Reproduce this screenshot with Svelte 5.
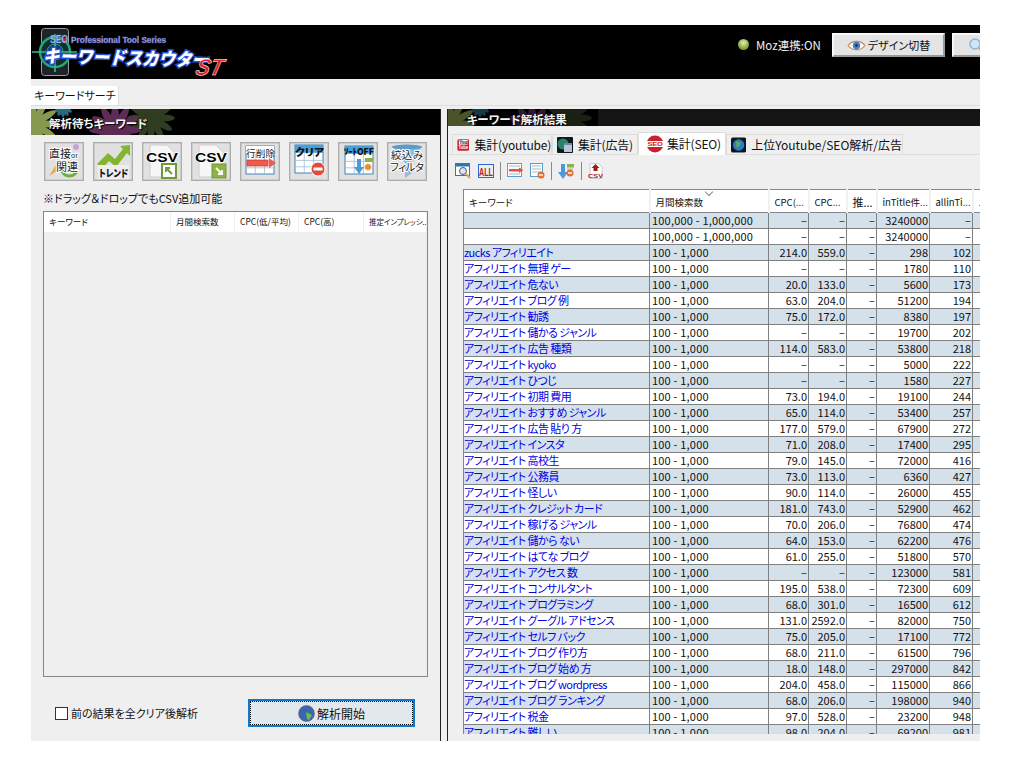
<script>
  const A = 'アフィリエイト ';
  const M = '100 - 1,000';
  const D = '–';
  const rows = [
    ['', '100,000 - 1,000,000', D, D, '3240000', D],
    ['', '100,000 - 1,000,000', D, D, '3240000', D],
    ['zucks アフィリエイト', M, '214.0', '559.0', '298', '102'],
    [A + '無理 ゲー', M, D, D, '1780', '110'],
    [A + '危ない', M, '20.0', '133.0', '5600', '173'],
    [A + 'ブログ 例', M, '63.0', '204.0', '51200', '194'],
    [A + '勧誘', M, '75.0', '172.0', '8380', '197'],
    [A + '儲かる ジャンル', M, D, D, '19700', '202'],
    [A + '広告 種類', M, '114.0', '583.0', '53800', '218'],
    [A + 'kyoko', M, D, D, '5000', '222'],
    [A + 'ひつじ', M, D, D, '1580', '227'],
    [A + '初期 費用', M, '73.0', '194.0', '19100', '244'],
    [A + 'おすすめ ジャンル', M, '65.0', '114.0', '53400', '257'],
    [A + '広告 貼り 方', M, '177.0', '579.0', '67900', '272'],
    [A + 'インスタ', M, '71.0', '208.0', '17400', '295'],
    [A + '高校生', M, '79.0', '145.0', '72000', '416'],
    [A + '公務員', M, '73.0', '113.0', '6360', '427'],
    [A + '怪しい', M, '90.0', '114.0', '26000', '455'],
    [A + 'クレジット カード', M, '181.0', '743.0', '52900', '462'],
    [A + '稼げる ジャンル', M, '70.0', '206.0', '76800', '474'],
    [A + '儲から ない', M, '64.0', '153.0', '62200', '476'],
    [A + 'はてな ブログ', M, '61.0', '255.0', '51800', '570'],
    [A + 'アクセス 数', M, D, D, '123000', '581'],
    [A + 'コンサルタント', M, '195.0', '538.0', '72300', '609'],
    [A + 'プログラミング', M, '68.0', '301.0', '16500', '612'],
    [A + 'グーグル アドセンス', M, '131.0', '2592.0', '82000', '750'],
    [A + 'セルフ バック', M, '75.0', '205.0', '17100', '772'],
    [A + 'ブログ 作り方', M, '68.0', '211.0', '61500', '796'],
    [A + 'ブログ 始め 方', M, '18.0', '148.0', '297000', '842'],
    [A + 'ブログ wordpress', M, '204.0', '458.0', '115000', '866'],
    [A + 'ブログ ランキング', M, '68.0', '206.0', '198000', '940'],
    [A + '税金', M, '97.0', '528.0', '23200', '948'],
    [A + '難しい', M, '98.0', '204.0', '69200', '981']
  ];
  const petals = [0, 30, 60, 90, 120, 150, 180, 210, 240, 270, 300, 330];
  const blooms = [
    { x: 120, y: 9, r: 12, w: 3.5, c: '#2f3d22' },
    { x: 84, y: 21, r: 13, w: 4, c: '#5c2c54' },
    { x: 32, y: -2, r: 5, w: 2, c: '#2a6a80' },
    { x: 2, y: 15, r: 13, w: 3.5, c: '#87994e' }
  ];
</script>

{#snippet flower(w, dim)}
  <svg class="flower" width={w} height="26" viewBox="0 0 {w} 26">
    <g opacity={dim}>
      {#each blooms as b}
        {#each petals as p}
          <ellipse cx={b.x + b.r} cy={b.y} rx={b.r} ry={b.w} fill={b.c} transform="rotate({p} {b.x} {b.y})" />
        {/each}
      {/each}
    </g>
  </svg>
{/snippet}

{#snippet grid(x, y, w, h, top)}
  <rect {x} {y} width={w} height={h} fill="#fff" stroke="#3c82b8" />
  <rect {x} {y} width={w} height={h * 0.28} fill={top} />
  <path d="M{x} {y + h * 0.55}H{x + w}M{x} {y + h * 0.78}H{x + w}M{x + w * 0.33} {y + h * 0.28}V{y + h}M{x + w * 0.66} {y + h * 0.28}V{y + h}" stroke="#9dbdd6" stroke-width="0.8" fill="none" />
{/snippet}

<div class="app">
  <header class="top">
    <svg class="logo" width="210" height="54" viewBox="0 0 210 54">
      <rect x="10.5" y="3.5" width="27" height="47" rx="3" fill="#1e2428" stroke="#9a9ea2" />
      <circle cx="24" cy="27" r="15" fill="#12302c" stroke="#22a878" stroke-width="2.5" />
      <circle cx="24" cy="27" r="8" fill="#123a78" stroke="#22a878" />
      <path d="M1 27H46M24 9V47" stroke="#3cb88a" stroke-width="1.6" />
      <text x="19" y="18" class="logo-seo" textLength="18" lengthAdjust="spacingAndGlyphs">SEO</text>
      <circle cx="33.6" cy="14.5" r="1.5" fill="#d82020" />
      <text x="40" y="18" class="logo-sub" textLength="95" lengthAdjust="spacingAndGlyphs">Professional Tool Series</text>
      <g transform="translate(14 0) rotate(1.5 100 30) skewX(-14)">
        <text x="8" y="40" class="logo-name" textLength="165" lengthAdjust="spacingAndGlyphs">キーワードスカウター</text>
      </g>
      <g transform="translate(13 0) skewX(-14)">
        <text x="163" y="50" class="logo-st" textLength="27" lengthAdjust="spacingAndGlyphs">ST</text>
      </g>
    </svg>
    <div class="top-right">
      <span class="led"></span>
      <span class="moz">Moz連携:ON</span>
      <button class="top-btn">
        <svg width="19" height="13" viewBox="0 0 20 14">
          <path d="M1 7C5 1 15 1 19 7C15 13 5 13 1 7Z" fill="#fff" stroke="#c98a5a" stroke-width="1.4" />
          <circle cx="10" cy="7" r="4" fill="#4a7fc0" />
          <circle cx="10" cy="7" r="1.6" fill="#123c78" />
        </svg>
        デザイン切替
      </button>
      <button class="top-btn search" aria-label="検索">
        <svg width="16" height="16" viewBox="0 0 16 16">
          <circle cx="7" cy="7" r="5" fill="#cfe6f6" stroke="#8fb6d6" stroke-width="1.5" />
          <path d="M11 11L15 15" stroke="#d9a050" stroke-width="2" />
        </svg>
      </button>
    </div>
  </header>

  <nav class="tabs-main"><span class="tab-main">キーワードサーチ</span></nav>

  <main class="split">
    <section class="left">
      <div class="panel-head tall">
        {@render flower(145, 1)}
        <h2 class="left-title">解析待ちキーワード</h2>
      </div>
      <div class="left-body">
        <div class="tools">
          <button class="tool" aria-label="直接or関連">
            <svg viewBox="0 0 38 37" width="38" height="37">
              <path d="M4 33L11 22L15 26Z" fill="#e8a850" />
              <path d="M17 28C20 35 30 35 33 26" fill="none" stroke="#6fb13a" stroke-width="3" />
              <circle cx="31" cy="4" r="3" fill="#c9a0d8" />
              <text x="4" y="15" class="ic-txt halo" font-size="11">直接<tspan font-size="7">or</tspan></text>
              <text x="11" y="28" class="ic-txt halo" font-size="11">関連</text>
            </svg>
          </button>
          <button class="tool" aria-label="トレンド">
            <svg viewBox="0 0 38 37" width="38" height="37">
              <path d="M3 21L14 10L21 16L29 6L26 3L36 2L36 13L33 10L22 24L15 18L8 26Z" fill="#84b52f" />
              <rect x="4" y="22" width="31" height="14" fill="#eee" />
              <text x="5" y="34" class="ic-bold" font-size="10" textLength="29" lengthAdjust="spacingAndGlyphs" fill="#1c2f48">トレンド</text>
            </svg>
          </button>
          <button class="tool" aria-label="CSV読込">
            <svg viewBox="0 0 38 37" width="38" height="37">
              <path d="M7 2H24L31 9V34H7Z" fill="#f7f7f7" stroke="#ccc" />
              <text x="3" y="19" class="ic-csv" font-size="13" textLength="32" lengthAdjust="spacingAndGlyphs">CSV</text>
              <rect x="19" y="21" width="14" height="14" fill="#fff" stroke="#6c9a36" stroke-width="2" />
              <path d="M29 31L23 25M23 29V25H27" stroke="#6c9a36" stroke-width="1.8" fill="none" />
            </svg>
          </button>
          <button class="tool" aria-label="CSV出力">
            <svg viewBox="0 0 38 37" width="38" height="37">
              <path d="M7 2H24L31 9V34H7Z" fill="#f7f7f7" stroke="#ccc" />
              <text x="3" y="19" class="ic-csv" font-size="13" textLength="32" lengthAdjust="spacingAndGlyphs">CSV</text>
              <rect x="20" y="21" width="14" height="14" fill="#8db442" stroke="#6c9a36" />
              <path d="M24 25L30 31M30 27V31H26" stroke="#fff" stroke-width="1.8" fill="none" />
            </svg>
          </button>
          <button class="tool" aria-label="行削除">
            <svg viewBox="0 0 38 37" width="38" height="37">
              {@render grid(5, 3, 28, 28, '#fff')}
              <text x="5" y="14" class="ic-txt" font-size="9.5" textLength="29">行削除</text>
              <rect x="6" y="17" width="21" height="6" fill="#ee5d4c" stroke="#c33" stroke-width="0.7" />
              <path d="M28 15L35 20L28 25Z" fill="#ee5d4c" />
            </svg>
          </button>
          <button class="tool" aria-label="クリア">
            <svg viewBox="0 0 38 37" width="38" height="37">
              {@render grid(5, 2, 28, 28, '#45a0dc')}
              <text x="5" y="13" class="ic-bold" font-size="10" textLength="29" lengthAdjust="spacingAndGlyphs">クリア</text>
              <circle cx="28" cy="26" r="7" fill="#e8473c" stroke="#fff" />
              <rect x="23.5" y="24.5" width="9" height="3" fill="#fff" />
            </svg>
          </button>
          <button class="tool" aria-label="ソートOFF">
            <svg viewBox="0 0 38 37" width="38" height="37">
              {@render grid(6, 3, 28, 28, '#45a0dc')}
              <text x="5" y="12" class="ic-bold" font-size="9" textLength="30" lengthAdjust="spacingAndGlyphs">ｿｰﾄOFF</text>
              <path d="M18 16V24H15L20 31L25 24H22V16Z" fill="#4f97d8" />
              <rect x="26" y="15" width="8" height="4" fill="#8db442" />
              <circle cx="29" cy="24" r="3.5" fill="#ec8a2c" stroke="#fff" stroke-width="0.7" />
            </svg>
          </button>
          <button class="tool" aria-label="絞込みフィルタ">
            <svg viewBox="0 0 38 37" width="38" height="37">
              <path d="M4 3H34L24 20V30L17 35V20Z" fill="#8dbfe0" />
              <ellipse cx="19" cy="4" rx="15" ry="2.5" fill="#5d9cc8" />
              <text x="3" y="16" class="ic-txt halo" font-size="10.5" textLength="32">絞込み</text>
              <text x="2" y="28" class="ic-txt halo" font-size="10.5" textLength="34">フィルタ</text>
            </svg>
          </button>
        </div>
        <p class="note">※ドラッグ＆ドロップでもCSV追加可能</p>
        <div class="list">
          <div class="list-head">
            <span class="c1">キーワード</span>
            <span class="c2">月間検索数</span>
            <span class="c3">CPC(低/平均)</span>
            <span class="c4">CPC(高)</span>
            <span class="c5">推定インプレッシ...</span>
          </div>
        </div>
        <div class="actions">
          <label class="check"><span class="box"></span>前の結果を全クリア後解析</label>
          <button class="start">
            <span class="start-in">
              <svg width="17" height="17" viewBox="0 0 17 17">
                <circle cx="8.5" cy="8.5" r="8" fill="#3a66b0" stroke="#666" stroke-width="0.6" />
                <path d="M8 7L14 10L11 15L9 14Z" fill="#6cc04a" />
              </svg>
              解析開始
            </span>
          </button>
        </div>
      </div>
    </section>

    <div class="divider"></div>

    <section class="right">
      <div class="panel-head short">
        {@render flower(150, 0.55)}
        <h2 class="right-title">キーワード解析結果</h2>
      </div>
      <div class="tabs">
        <span class="tab">
          <svg width="16" height="16" viewBox="0 0 16 16">
            <rect x="0.5" y="0.5" width="15" height="15" rx="2" fill="#c8222a" />
            <rect x="2.5" y="1.5" width="11" height="6" fill="#fff" />
            <text x="3" y="6.2" class="yt dark" textLength="10" lengthAdjust="spacingAndGlyphs">You</text>
            <text x="2" y="13.5" class="yt" textLength="12" lengthAdjust="spacingAndGlyphs">Tube</text>
          </svg>
          集計(youtube)
        </span>
        <span class="tab ad">
          <svg width="16" height="16" viewBox="0 0 16 16">
            <rect width="16" height="16" rx="1" fill="#0e1a1a" />
            <circle cx="6" cy="7" r="5.5" fill="#2f7f70" />
            <rect x="7" y="6" width="8" height="9" fill="#b9c7d4" />
            <rect x="7" y="6" width="8" height="2" fill="#6c8aa8" />
          </svg>
          集計(広告)
        </span>
        <span class="tab on">
          <svg width="18" height="18" viewBox="0 0 18 18">
            <circle cx="9" cy="9" r="8.5" fill="#c8222a" />
            <rect x="0" y="6" width="18" height="6" fill="#fff" />
            <text x="1.5" y="11.4" class="seo" textLength="15" lengthAdjust="spacingAndGlyphs">SEO</text>
          </svg>
          集計(SEO)
        </span>
        <span class="tab wide">
          <svg width="16" height="16" viewBox="0 0 16 16">
            <rect width="16" height="16" rx="2" fill="#10181c" />
            <circle cx="8" cy="8" r="6" fill="#2a7cc8" />
            <path d="M5 4L10 5L9 9L6 11Z" fill="#5cae4a" />
          </svg>
          上位Youtube/SEO解析/広告
        </span>
      </div>
      <div class="bar">
        <svg width="17" height="16" viewBox="0 0 17 16">
          <rect x="0.5" y="0.5" width="14" height="12" fill="#fff" stroke="#2c78b0" />
          <rect x="0.5" y="0.5" width="14" height="3" fill="#2c78b0" />
          <circle cx="8" cy="8" r="3.5" fill="#d4e6f4" stroke="#557" />
          <path d="M11 11L15 15" stroke="#e0a040" stroke-width="2" />
        </svg>
        <svg width="16" height="14" viewBox="0 0 16 14">
          <rect x="0.5" y="0.5" width="15" height="13" fill="#eee" stroke="#36c" />
          <text x="1" y="12" class="all" textLength="14" lengthAdjust="spacingAndGlyphs">ALL</text>
        </svg>
        <span class="sep"></span>
        <svg width="17" height="15" viewBox="0 0 17 15">
          <rect x="0.5" y="0.5" width="14" height="13" fill="#fff" stroke="#5f9ccc" />
          <path d="M2 3H13M2 11H13" stroke="#9cbad2" />
          <rect x="2" y="6" width="10" height="2.5" fill="#e8503e" />
          <path d="M12 4.5L16.5 7L12 10Z" fill="#e8503e" />
        </svg>
        <svg width="15" height="16" viewBox="0 0 15 16">
          <rect x="0.5" y="0.5" width="12" height="13" fill="#fff" stroke="#5f9ccc" />
          <path d="M2 3H11M2 6H11M2 9H11" stroke="#9cbad2" />
          <circle cx="11" cy="12" r="3.5" fill="#e8702c" />
          <rect x="9" y="11.3" width="4" height="1.4" fill="#fff" />
        </svg>
        <span class="sep"></span>
        <svg width="17" height="16" viewBox="0 0 17 16">
          <path d="M3 1H7V9H10L5 16L0 9H3Z" fill="#4f97d8" />
          <rect x="9" y="1" width="7" height="3.5" fill="#8db442" />
          <path d="M9 6H15" stroke="#9cbad2" />
          <circle cx="12" cy="10" r="3.5" fill="#e8702c" />
          <rect x="10" y="9.3" width="4" height="1.4" fill="#fff" />
        </svg>
        <span class="sep"></span>
        <svg width="15" height="16" viewBox="0 0 15 16">
          <path d="M2 0.5H10L14 4V15.5H2Z" fill="#fff" stroke="#ccc" />
          <path d="M7.5 1L11.5 5H9.5V8H5.5V5H3.5Z" fill="#a01818" />
          <text x="0" y="14.5" class="csv-s" textLength="15" lengthAdjust="spacingAndGlyphs">CSV</text>
        </svg>
      </div>
      <div class="table-wrap">
        <table>
          <colgroup>
            <col class="w1" /><col class="w2" /><col class="w3" /><col class="w4" /><col class="w5" /><col class="w6" /><col class="w7" /><col class="w8" />
          </colgroup>
          <thead>
            <tr>
              <th>キーワード</th>
              <th class="sorted">月間検索数<i class="caret"></i></th>
              <th>CPC(...</th>
              <th>CPC...</th>
              <th class="big">推...</th>
              <th>inTitle件...</th>
              <th>allinTi...</th>
              <th>...</th>
            </tr>
          </thead>
          <tbody>
            {#each rows as r, i}
              <tr class:odd={i % 2 === 0}>
                <td class="kw">{r[0]}</td>
                <td class="mono">{r[1]}</td>
                <td class="num">{r[2]}</td>
                <td class="num">{r[3]}</td>
                <td class="num">{D}</td>
                <td class="num">{r[4]}</td>
                <td class="num">{r[5]}</td>
                <td></td>
              </tr>
            {/each}
          </tbody>
        </table>
      </div>
    </section>
  </main>
</div>

<style>
  :global(body) {
    margin: 0;
    background: #fff;
  }
  .app {
    width: 949px;
    height: 716px;
    margin: 25px 0 0 31px;
    overflow: hidden;
    display: flex;
    flex-direction: column;
    background: #efefef;
    font-family: "Noto Sans CJK JP", "Liberation Sans", sans-serif;
    font-size: 12px;
    font-feature-settings: "palt";
    color: #111;
  }
  button {
    font: inherit;
    padding: 0;
  }
  .top {
    height: 54px;
    flex: none;
    background: #000;
    display: flex;
    justify-content: space-between;
    overflow: hidden;
  }
  .logo {
    flex: none;
  }
  .logo-seo {
    font: bold 10px "Liberation Sans", sans-serif;
    fill: #c4d4f4;
    stroke: #4a5cc8;
    stroke-width: 0.4px;
  }
  .logo-sub {
    font: bold 9px "Liberation Sans", sans-serif;
    fill: #c2c6ea;
    stroke: #5a5cc0;
    stroke-width: 0.5px;
  }
  .logo-name {
    font: 900 18px "Noto Sans CJK JP", sans-serif;
    fill: #fff;
    stroke: #2450d0;
    stroke-width: 3px;
    paint-order: stroke;
  }
  .logo-st {
    font: bold italic 23px "Liberation Sans", sans-serif;
    fill: #e02020;
    stroke: #fff;
    stroke-width: 0.5px;
  }
  .top-right {
    display: flex;
    align-items: flex-start;
    padding-top: 8px;
    width: 242px;
    flex: none;
    box-sizing: border-box;
    overflow: hidden;
  }
  .led {
    width: 11px;
    height: 11px;
    margin: 6px 7px 0 0;
    border-radius: 50%;
    background: radial-gradient(circle at 50% 35%, #e0eeb0, #7a9c30 70%);
    flex: none;
  }
  .moz {
    color: #f2f2f2;
    font-size: 11.5px;
    line-height: 24px;
    width: 76px;
    flex: none;
  }
  .top-btn {
    height: 24px;
    width: 113px;
    flex: none;
    background: #e4e4e4;
    border: 2px solid #fff;
    border-color: #f8f8f8 #999 #999 #f8f8f8;
    display: flex;
    align-items: center;
    justify-content: center;
    gap: 2px;
    font-size: 11px;
    color: #111;
  }
  .search {
    margin-left: 7px;
    justify-content: flex-start;
    padding-left: 14px;
    width: 40px;
  }
  .tabs-main {
    height: 27px;
    flex: none;
    display: flex;
    align-items: flex-end;
    box-sizing: border-box;
    border-bottom: 1px solid #ddd;
  }
  .tab-main {
    width: 88px;
    height: 19px;
    background: #fff;
    border-right: 1px solid #ddd;
    line-height: 19px;
    padding-left: 3px;
    box-sizing: border-box;
    font-size: 11px;
    white-space: nowrap;
  }
  .split {
    flex: 1;
    min-height: 0;
    display: flex;
    margin-top: 3px;
  }
  .left {
    width: 409px;
    flex: none;
    display: flex;
    flex-direction: column;
  }
  .panel-head {
    position: relative;
    background: #000;
    flex: none;
    overflow: hidden;
    display: flex;
    align-items: center;
  }
  .tall {
    height: 26px;
  }
  .short {
    height: 17px;
    background: linear-gradient(90deg, #000 0, #000 150px, #141414 150px);
  }
  .flower {
    position: absolute;
    left: 0;
    top: 0;
  }
  .panel-head h2 {
    position: relative;
    margin: 0;
    color: #f4f4f4;
    font-size: 11.5px;
    font-weight: 700;
    line-height: 1;
    text-shadow: 1px 1px 1px #000;
  }
  .left-title {
    padding: 4px 0 0 18px;
  }
  .right-title {
    padding: 4px 0 0 19px;
  }
  .left-body {
    flex: 1;
    min-height: 0;
    display: flex;
    flex-direction: column;
    padding: 7px 12px 14px 12px;
  }
  .tools {
    display: flex;
    gap: 9px;
    height: 40px;
    flex: none;
    padding-left: 1px;
  }
  .tool {
    width: 40px;
    height: 39px;
    box-sizing: border-box;
    background: #e1e1e1;
    border: 1px solid #adadad;
    box-shadow: inset 0 0 0 0.5px #bbb;
    display: flex;
    align-items: center;
    justify-content: center;
    overflow: hidden;
  }
  .ic-txt {
    font-family: "Noto Sans CJK JP", sans-serif;
    fill: #222;
  }
  .halo {
    stroke: #fff;
    stroke-width: 2px;
    paint-order: stroke;
  }
  .ic-bold {
    font-family: "Noto Sans CJK JP", sans-serif;
    font-weight: 900;
    fill: #111;
  }
  .ic-csv {
    font-family: "Liberation Sans", sans-serif;
    font-weight: 700;
    fill: #000;
    stroke: #fff;
    stroke-width: 1.5px;
    paint-order: stroke;
  }
  .note {
    margin: 7px 0 4px;
    line-height: 18px;
    font-size: 11px;
  }
  .list {
    flex: 1;
    min-height: 0;
    border: 1px solid #85858f;
    box-sizing: border-box;
    width: 385px;
  }
  .list-head {
    display: flex;
    height: 20px;
    font-size: 8.5px;
    line-height: 19px;
  }
  .list-head span {
    background: #fff;
    padding-left: 5px;
    box-sizing: border-box;
    margin-right: 1px;
    white-space: nowrap;
    overflow: hidden;
  }
  .c1 { width: 126px; }
  .c2 { width: 63px; }
  .c3 { width: 63px; }
  .c4 { width: 64px; }
  .list-head .c5 {
    width: 62px;
    font-size: 7.5px;
    letter-spacing: -0.1px;
  }
  .actions {
    height: 50px;
    flex: none;
    display: flex;
    align-items: flex-end;
    padding-left: 12px;
  }
  .check {
    display: flex;
    align-items: center;
    gap: 3px;
    height: 28px;
    font-size: 11px;
    width: 193px;
    flex: none;
  }
  .box {
    width: 13px;
    height: 13px;
    box-sizing: border-box;
    border: 1px solid #333;
    background: #fff;
  }
  .start {
    width: 167px;
    height: 28px;
    box-sizing: border-box;
    flex: none;
    background: #e3e8ec;
    border: 2px solid #0e78d0;
    padding: 0;
  }
  .start-in {
    display: flex;
    align-items: center;
    justify-content: center;
    gap: 2px;
    height: 100%;
    box-sizing: border-box;
    border: 1px dotted #000;
    font-size: 12px;
    color: #111;
  }
  .divider {
    width: 8px;
    flex: none;
    box-sizing: border-box;
    border-left: 1px solid #222;
    border-right: 1px solid #222;
    background: #efefef;
  }
  .right {
    flex: 1;
    min-width: 0;
    display: flex;
    flex-direction: column;
  }
  .tabs {
    height: 29px;
    flex: none;
    display: flex;
    align-items: flex-end;
    padding-left: 4px;
    box-sizing: border-box;
    border-bottom: 1px solid #ddd;
  }
  .tab {
    height: 20px;
    box-sizing: border-box;
    width: 100px;
    flex: none;
    display: flex;
    align-items: center;
    gap: 5px;
    padding-left: 4px;
    border: 1px solid #ddd;
    border-bottom: 0;
    white-space: nowrap;
    letter-spacing: -0.2px;
  }
  .ad {
    width: 86px;
  }
  .on {
    height: 23px;
    width: 88px;
    background: #fff;
    margin-bottom: -1px;
    border-bottom: 1px solid #fff;
    padding-left: 7px;
    gap: 3px;
  }
  .wide {
    width: 177px;
    letter-spacing: 0;
  }
  .yt {
    font: bold 6.5px "Liberation Sans", sans-serif;
    fill: #fff;
  }
  .dark {
    fill: #111;
  }
  .seo {
    font: bold 6px "Liberation Sans", sans-serif;
    fill: #c8222a;
  }
  .all {
    font: 900 10px "Liberation Sans", sans-serif;
    fill: #c01818;
  }
  .csv-s {
    font: bold 5.5px "Liberation Sans", sans-serif;
    fill: #a01818;
  }
  .bar {
    height: 34px;
    flex: none;
    display: flex;
    align-items: center;
    padding-left: 7px;
    gap: 6px;
    box-sizing: border-box;
    padding-bottom: 3px;
  }
  .sep {
    width: 1px;
    height: 18px;
    background: #888;
  }
  .table-wrap {
    flex: 1;
    min-height: 0;
    margin: 0 0 7px 15px;
    overflow: hidden;
  }
  table {
    border-collapse: collapse;
    table-layout: fixed;
    width: 560px;
    border-top: 1px solid #85858f;
    border-left: 1px solid #85858f;
    background: #fff;
    font-size: 11px;
  }
  .w1 { width: 186px; }
  .w2 { width: 119px; }
  .w3 { width: 40px; }
  .w4 { width: 38px; }
  .w5 { width: 30px; }
  .w6 { width: 53px; }
  .w7 { width: 43px; }
  .w8 { width: 51px; }
  thead th {
    height: 20px;
    padding: 2px 0 0 5px;
    font-size: 9.5px;
    font-weight: 400;
    text-align: left;
    background: #fff;
    white-space: nowrap;
    overflow: hidden;
    border-right: 2px solid #f1f1f1;
    border-bottom: 1px solid #85858f;
    position: relative;
  }
  thead th.big {
    font-size: 11px;
  }
  .caret {
    position: absolute;
    left: 55px;
    top: -1px;
    width: 5px;
    height: 5px;
    transform: rotate(45deg);
    border-right: 1px solid #888;
    border-bottom: 1px solid #888;
  }
  tbody td {
    height: 15px;
    padding: 0 1px;
    line-height: 15px;
    border-right: 1px solid #808080;
    border-bottom: 1px solid #808080;
    white-space: nowrap;
    overflow: hidden;
    color: #111;
  }
  tbody tr.odd td {
    background: #d4e0ea;
  }
  tbody td.kw {
    color: #0000e6;
    font-size: 11px;
    letter-spacing: -0.55px;
    padding-left: 0;
  }
  .mono {
    padding-left: 2px;
    letter-spacing: 0.2px;
  }
  .num {
    text-align: right;
  }
</style>
